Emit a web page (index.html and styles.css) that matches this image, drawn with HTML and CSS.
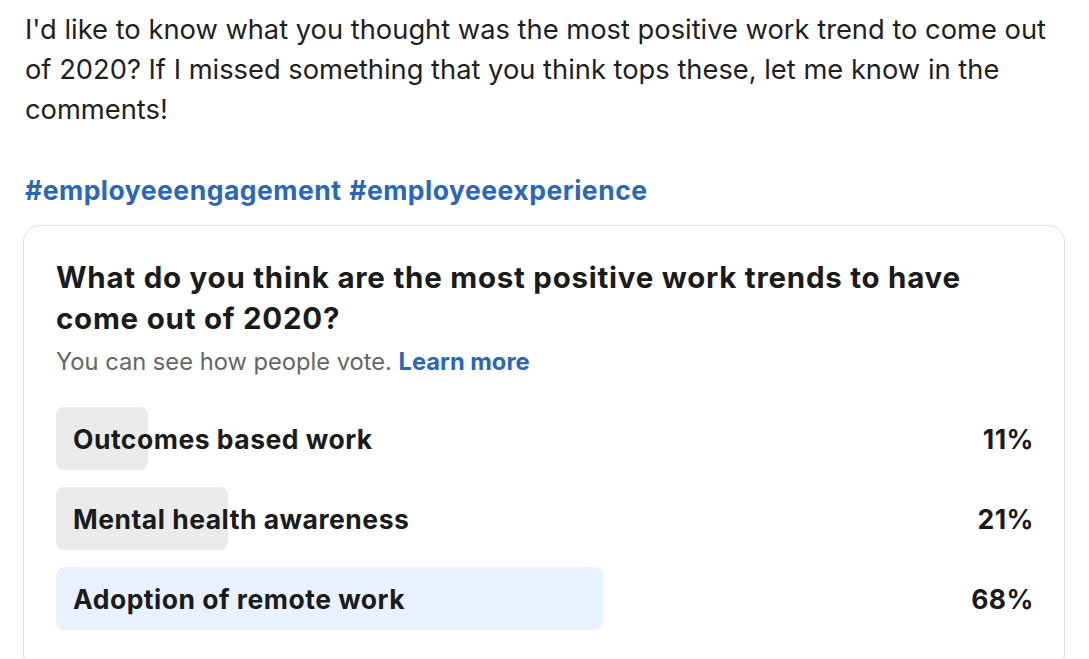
FILE: index.html
```html
<!DOCTYPE html>
<html>
<head>
<meta charset="utf-8">
<link rel="stylesheet" href="styles.css">
</head>
<body>
<div class="post">
  <p class="text">I'd like to know what you thought was the most positive work trend to come out of 2020? If I missed something that you think tops these, let me know in the comments!</p>
  <p class="text tags"><a class="tag">#employeeengagement</a> <a class="tag">#employeeexperience</a></p>
  <div class="card">
    <h2 class="question">What do you think are the most positive work trends to have come out of 2020?</h2>
    <p class="sub">You can see how people vote. <a class="learn">Learn more</a></p>
    <div class="options">
      <div class="option">
        <div class="bar" style="width:92px"></div>
        <span class="label">Outcomes based work</span>
        <span class="pct">11%</span>
      </div>
      <div class="option">
        <div class="bar" style="width:172px"></div>
        <span class="label">Mental health awareness</span>
        <span class="pct">21%</span>
      </div>
      <div class="option">
        <div class="bar top" style="width:547px"></div>
        <span class="label">Adoption of remote work</span>
        <span class="pct">68%</span>
      </div>
    </div>
  </div>
</div>
</body>
</html>
```
FILE: styles.css
```css
html, body {
  margin: 0;
  padding: 0;
  background: #ffffff;
}
body {
  font-family: Inter, "Noto Sans", sans-serif;
  color: #1f1f1f;
  overflow: hidden;
}
.post {
  padding: 10px 25px 0 25px;
}
.text {
  margin: 0;
  font-size: 27.3px;
  line-height: 40px;
  width: 1035px;
}
.tags {
  margin-top: 40px;
}
.tag {
  color: #2a66bb;
  font-weight: 700;
  font-size: 26.5px;
  letter-spacing: 0.5px;
}
.card {
  margin: 14px 0 0 -2px;
  width: 1042px;
  border: 1px solid #e0dfdc;
  border-radius: 16px;
  padding: 31px 30px 40px 32px;
  box-sizing: border-box;
}
.question {
  margin: 0;
  font-size: 29.5px;
  line-height: 41px;
  font-weight: 700;
  letter-spacing: 0.75px;
  color: #1b1b1b;
}
.sub {
  margin: 8px 0 0 0;
  font-size: 23.7px;
  line-height: 30px;
  color: #666666;
}
.learn {
  color: #2a66bb;
  font-weight: 700;
}
.options {
  margin-top: 30px;
  display: flex;
  flex-direction: column;
  gap: 17px;
}
.option {
  position: relative;
  height: 63px;
  display: flex;
  align-items: center;
  justify-content: space-between;
  padding: 0 0 0 17px;
  font-size: 26.5px;
  font-weight: 700;
  letter-spacing: 0.5px;
  color: #1b1b1b;
}
.bar {
  position: absolute;
  left: 0;
  top: 0;
  bottom: 0;
  background: #ebebeb;
  border-radius: 8px;
  z-index: 0;
}
.bar.top {
  background: #e8f1fd;
}
.label, .pct {
  position: relative;
  z-index: 1;
}
```
